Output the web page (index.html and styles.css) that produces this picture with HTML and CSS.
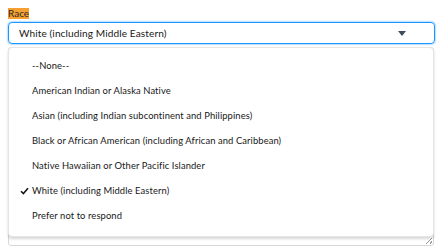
FILE: index.html
```html
<!DOCTYPE html>
<html lang="en">
<head>
  <meta charset="UTF-8">
  <meta name="viewport" content="width=device-width, initial-scale=1.0">
  <title>Race</title>
  <link rel="stylesheet" href="styles.css">
</head>
<body>
  <div class="field">
    <span class="label">Race</span>
    <div class="combo">
      <span class="combo-value">White (including Middle Eastern)</span>
      <svg class="combo-arrow" width="8" height="5" viewBox="0 0 8 5"><path d="M0 0H8L4 5Z" fill="#3e4c5e"/></svg>
    </div>
    <div class="below">
      <div class="area">
        <span class="grip"></span>
      </div>
      <!-- lista desplegada encima del campo de abajo -->
      <ul class="listbox">
        <li>--None--</li>
        <li>American Indian or Alaska Native</li>
        <li>Asian (including Indian subcontinent and Philippines)</li>
        <li>Black or African American (including African and Caribbean)</li>
        <li>Native Hawaiian or Other Pacific Islander</li>
        <li class="selected">
          <svg class="check" width="9" height="8" viewBox="0 0 9 8"><path d="M1 4.2L3.4 6.6L8 1.2" fill="none" stroke="#181818" stroke-width="1.6"/></svg>
          White (including Middle Eastern)
        </li>
        <li>Prefer not to respond</li>
      </ul>
    </div>
  </div>
</body>
</html>
```

FILE: styles.css
```css
body {
  margin: 0;
  padding: 8px 6px 0 8px;
  background: #fff;
  font-family: "Lato", "Liberation Sans", sans-serif;
  color: #181818;
}

.label {
  display: block;
  width: fit-content;
  background-color: #f7a032;
  font-size: 10px;
  line-height: 11px;
  color: #2b2b2b;
}

.combo {
  margin-top: 3px;
  height: 20px;
  border: 1px solid #1b96ff;
  border-radius: 4px;
  box-shadow: 0 0 2px #1b96ff;
  display: flex;
  align-items: center;
  justify-content: space-between;
  padding: 0 28px 0 10px;
  font-size: 10.1px;
  letter-spacing: 0.1px;
}

.combo-arrow { display: block; }

.below {
  position: relative;
  margin-top: 3px;
}

.area {
  height: 197px;
  margin-right: 1px;
  border: 1px solid #d8d8d8;
  border-radius: 3px;
  position: relative;
}

.grip {
  position: absolute;
  right: 1px;
  bottom: 1px;
  width: 6px;
  height: 6px;
  background: linear-gradient(135deg, transparent 45%, #999 45%, #999 55%, transparent 55%, transparent 75%, #999 75%, #999 85%, transparent 85%);
}

.listbox {
  position: absolute;
  top: 0;
  left: 0;
  right: 1px;
  height: 190px;
  box-sizing: border-box;
  margin: 0;
  padding: 5px 0 0 0;
  list-style: none;
  background: #fff;
  border: 1px solid #e5e5e5;
  border-radius: 4px;
  box-shadow: 0 2px 3px rgba(0, 0, 0, 0.16);
  font-size: 9.4px;
  letter-spacing: 0.1px;
}

.listbox li {
  height: 25px;
  display: flex;
  align-items: center;
  padding-left: 23px;
}

.listbox li.selected { padding-left: 11px; }

.check {
  display: block;
  margin-right: 3px;
}
```
